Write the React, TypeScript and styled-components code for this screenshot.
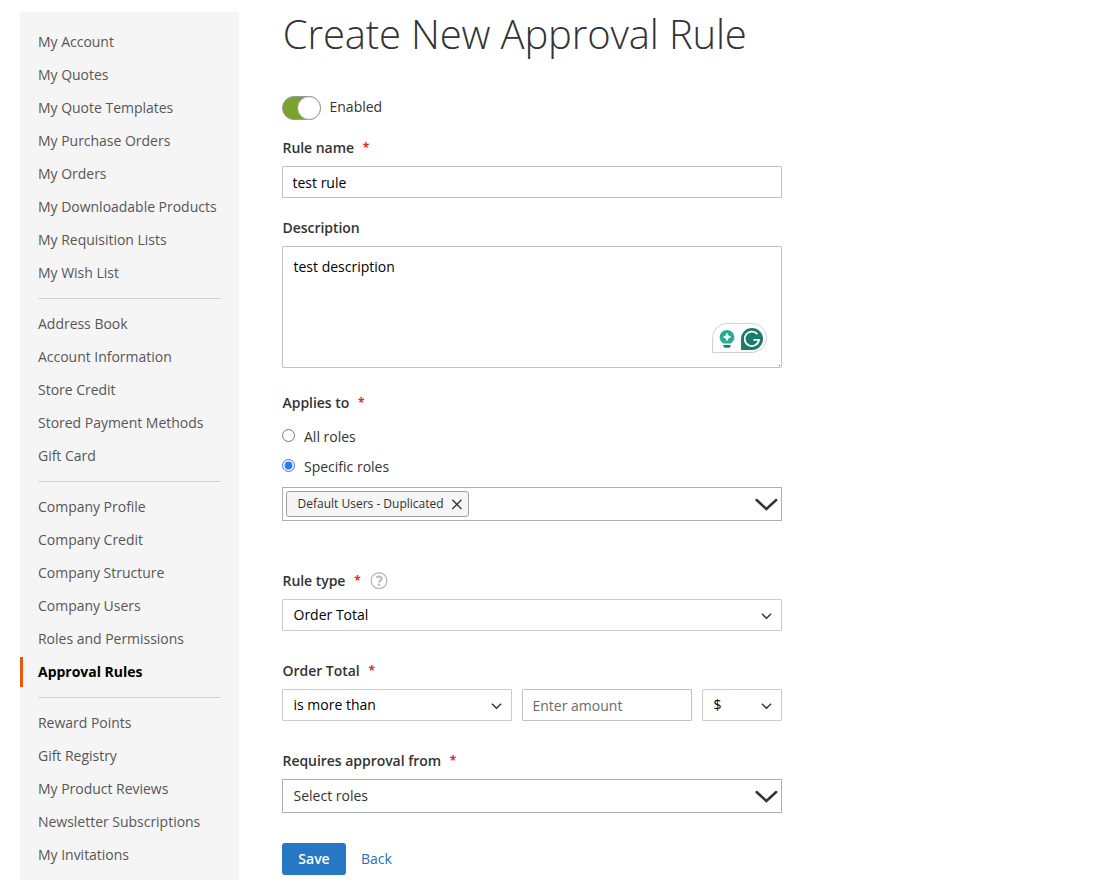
import React, { useState } from 'react'
import styled, { createGlobalStyle, css } from 'styled-components'

const GlobalStyle = createGlobalStyle`
  * {
    box-sizing: border-box;
  }

  body {
    margin: 0;
    background-color: white;
    color: #333;
    font-family: 'Open Sans', 'Noto Sans', sans-serif;
    font-size: 14px;
    line-height: 20px;
  }
`

const Page = styled.div`
  display: flex;
  align-items: flex-start;
  gap: 43px;
  height: 880px;
  padding: 12px 20px 0;
  overflow: hidden;
`

const Sidebar = styled.nav`
  flex: none;
  width: 219px;
  height: 900px;
  padding: 15px 0;
  background-color: #f5f5f5;
`

const NavGroup = styled.ul`
  display: flex;
  flex-direction: column;
  gap: 3px;
  margin: 0;
  padding: 0;
  list-style: none;
`

const Divider = styled.hr`
  margin: 10px 18px;
  border: none;
  border-top: 1px solid #d1d1d1;
`

const NavItem = styled.li<{ isCurrent?: boolean; }>`
  height: 30px;
  padding-left: 15px;
  border-left: 3px solid ${ props => props.isCurrent ? '#e8590c' : 'transparent' };
  color: ${ props => props.isCurrent ? 'black' : '#575757' };
  font-weight: ${ props => props.isCurrent ? 700 : 400 };
  letter-spacing: -0.02px;
  line-height: 30px;
  white-space: nowrap;
`

const Form = styled.main`
  width: 500px;
`

const Title = styled.h1`
  margin: 0 0 40px;
  padding-left: 0.8px;
  color: #333;
  font-size: 40px;
  font-weight: 300;
  letter-spacing: -0.15px;
  line-height: 44px;
  white-space: nowrap;
`

const ToggleRow = styled.label`
  display: flex;
  gap: 8.5px;
  height: 24px;
  margin-bottom: 18px;
  line-height: 22px;
`

const Track = styled.span`
  display: flex;
  justify-content: flex-end;
  width: 39px;
  height: 24px;
  border: 1px solid #999;
  border-radius: 12px;
  background-color: #79a22e;
`

const Knob = styled.span`
  width: 24px;
  height: 24px;
  margin: -1px;
  border: 1px solid #999;
  border-radius: 50%;
  background-color: white;
`

const Field = styled.div<{ gap?: number; }>`
  margin-bottom: ${ props => props.gap ?? 30 }px;
`

const Label = styled.div<{ gap?: number; }>`
  display: flex;
  align-items: center;
  height: 20px;
  margin-bottom: ${ props => props.gap ?? 8 }px;
  padding-left: 0.5px;
  font-weight: 600;
  letter-spacing: -0.04px;
`

const Required = styled.span`
  margin-left: 8.8px;
  color: #e02b27;
  font-size: 12px;
  font-weight: 700;
`

const HelpIcon = styled.svg`
  margin-left: 9px;
`

const control = css`
  display: block;
  width: 100%;
  border: 1px solid #c2c2c2;
  border-radius: 1px;
  outline: none;
  background-color: white;
  color: black;
  font-family: inherit;
  font-size: 14px;
`

const Input = styled.input`
  ${ control }
  height: 32px;
  padding: 1px 9px 0 9.5px;

  &::placeholder {
    color: #6b6b6b;
    opacity: 1;
  }
`

const TextareaWrapper = styled.div`
  position: relative;
`

const Textarea = styled.textarea`
  ${ control }
  height: 122px;
  padding: 10px 10.5px;
  line-height: 20px;
  resize: none;
`

const WritingBadge = styled.div`
  position: absolute;
  right: 15px;
  bottom: 15px;
  display: flex;
  align-items: center;
  justify-content: center;
  gap: 6px;
  width: 55px;
  height: 30px;
  padding: 1px 0 0 2px;
  border: 1px solid #cfd0dc;
  border-radius: 15px 15px 15px 0;
  background-color: white;
`

const Grip = styled.span`
  position: absolute;
  right: 2px;
  bottom: 2px;
  width: 1px;
  height: 1px;
  background-color: #444;
`

const RadioRow = styled.label`
  display: flex;
  align-items: center;
  height: 20px;
  margin-bottom: 10px;
`

const Radio = styled.input`
  width: 13px;
  height: 13px;
  margin: 0 9px 3px 0;
  accent-color: #2979ff;
`

const MultiSelect = styled.div`
  display: flex;
  align-items: center;
  justify-content: space-between;
  height: 34px;
  padding: 0 3px;
  border: 1px solid #adadad;
`

const Placeholder = styled.span`
  padding-left: 7.5px;
`

const Chip = styled.span`
  display: flex;
  align-items: center;
  justify-content: space-between;
  width: 183px;
  height: 26px;
  padding: 0 5px 0 10.5px;
  border: 1px solid #a79d95;
  border-radius: 3px;
  background-color: #f5f5f5;
  font-size: 12px;
  line-height: 24px;
`

const Select = styled.div`
  ${ control }
  display: flex;
  align-items: center;
  justify-content: space-between;
  height: 32px;
  padding: 0 8px 0 10.5px;
  border-color: #ccc;
  line-height: 30px;
`

const AmountRow = styled.div`
  display: grid;
  grid-template-columns: 230px 170px 80px;
  gap: 10px;
`

const Actions = styled.div`
  display: flex;
  align-items: center;
  gap: 15px;
`

const SaveButton = styled.button`
  width: 64px;
  height: 32px;
  padding: 0 0 1px;
  border: none;
  border-radius: 3px;
  background-color: #2678c4;
  color: white;
  font-family: inherit;
  font-size: 14px;
  font-weight: 600;
  line-height: 20px;
`

const BackLink = styled.a`
  color: #1f6fb8;
`

const groups = [
  ['My Account', 'My Quotes', 'My Quote Templates', 'My Purchase Orders', 'My Orders', 'My Downloadable Products', 'My Requisition Lists', 'My Wish List'],
  ['Address Book', 'Account Information', 'Store Credit', 'Stored Payment Methods', 'Gift Card'],
  ['Company Profile', 'Company Credit', 'Company Structure', 'Company Users', 'Roles and Permissions', 'Approval Rules'],
  ['Reward Points', 'Gift Registry', 'My Product Reviews', 'Newsletter Subscriptions', 'My Invitations'],
]

const SmallChevron = () => (
  <svg width='13' height='10' viewBox='0 0 13 10' fill='none'>
    <path d='M1.9 3.8 L6.5 8.3 L11.1 3.8' stroke='#333' strokeWidth='1.4' />
  </svg>
)

const BigChevron = () => (
  <svg width='24' height='16' viewBox='0 0 24 16' fill='none'>
    <path d='M2.6 4 L12.4 13 L22.2 4' stroke='#333' strokeWidth='2.5' strokeLinecap='round' />
  </svg>
)

const Asterisk = () => <Required>*</Required>

const App = () => {
  const [name, setName] = useState('test rule')
  const [description, setDescription] = useState('test description')
  const [scope, setScope] = useState('specific')

  return (
    <Page>
      <GlobalStyle />
      <Sidebar>
        { groups.map((group, index) => (
          <React.Fragment key={ group[0] }>
            { index > 0 && <Divider /> }
            <NavGroup>
              { group.map(item => <NavItem key={ item } isCurrent={ item === 'Approval Rules' }>{ item }</NavItem>) }
            </NavGroup>
          </React.Fragment>
        )) }
      </Sidebar>
      <Form>
        <Title>Create New Approval Rule</Title>
        <ToggleRow>
          <Track><Knob /></Track>
          Enabled
        </ToggleRow>
        <Field gap={ 20 }>
          <Label>Rule name<Asterisk /></Label>
          <Input value={ name } onChange={ e => setName(e.target.value) } />
        </Field>
        <Field gap={ 25 }>
          <Label>Description</Label>
          <TextareaWrapper>
            <Textarea value={ description } spellCheck={ false } onChange={ e => setDescription(e.target.value) } />
            <WritingBadge>
              <svg width='16' height='20' viewBox='0 0 16 20'>
                <path d='M8 1 C3.9 1 .7 4.2 .7 8.2 C.7 11.3 2.4 12.9 4.2 14.5 H11.8 C13.6 12.9 15.3 11.3 15.3 8.2 C15.3 4.2 12.1 1 8 1Z' fill='#27ae91' />
                <path d='M8 4.5 C8.6 6.7 9.3 7.4 11.5 8 C9.3 8.6 8.6 9.3 8 11.5 C7.4 9.3 6.7 8.6 4.5 8 C6.7 7.4 7.4 6.7 8 4.5Z' fill='white' stroke='white' strokeLinejoin='round' />
                <path d='M4.3 16 H11.7 V17 Q11.4 18.8 9.8 18.8 H6.2 Q4.6 18.8 4.3 17Z' fill='#16806d' />
              </svg>
              <svg width='22' height='22' viewBox='0 0 22 22'>
                <path d='M0 22 V11 A11 11 0 1 1 11 22Z' fill='#1c7c6c' />
                <path d='M16.4 6.2 A7.2 7.2 0 1 0 18 11.8 H12.4' fill='none' stroke='white' strokeWidth='1.8' />
              </svg>
            </WritingBadge>
            <Grip />
          </TextareaWrapper>
        </Field>
        <Field gap={ 50 }>
          <Label gap={ 14 }>Applies to<Asterisk /></Label>
          <RadioRow>
            <Radio type='radio' name='scope' checked={ scope === 'all' } onChange={ () => setScope('all') } />
            All roles
          </RadioRow>
          <RadioRow>
            <Radio type='radio' name='scope' checked={ scope === 'specific' } onChange={ () => setScope('specific') } />
            Specific roles
          </RadioRow>
          <MultiSelect>
            <Chip>
              Default Users - Duplicated
              <svg width='12' height='12' viewBox='0 0 12 12'>
                <path d='M1.3 1.8 L10.5 11 M10.5 1.8 L1.3 11' stroke='#333' strokeWidth='1.3' />
              </svg>
            </Chip>
            <BigChevron />
          </MultiSelect>
        </Field>
        <Field>
          <Label>
            Rule type<Asterisk />
            <HelpIcon width='18' height='18' viewBox='0 0 18 18' fill='none' stroke='#bbb'>
              <circle cx='9' cy='8.7' r='7.9' strokeWidth='1.4' />
              <path d='M6.3 5.6 Q7.3 4.6 9 4.6 Q11.6 4.6 11.6 6.7 Q11.6 8 10.2 8.7 Q9 9.4 9 10.5' strokeWidth='2' />
              <path d='M9 11.6 V13.8' strokeWidth='2.3' />
            </HelpIcon>
          </Label>
          <Select>Order Total<SmallChevron /></Select>
        </Field>
        <Field>
          <Label>Order Total<Asterisk /></Label>
          <AmountRow>
            <Select>is more than<SmallChevron /></Select>
            <Input placeholder='Enter amount' />
            <Select>$<SmallChevron /></Select>
          </AmountRow>
        </Field>
        <Field>
          <Label>Requires approval from<Asterisk /></Label>
          <MultiSelect>
            <Placeholder>Select roles</Placeholder>
            <BigChevron />
          </MultiSelect>
        </Field>
        <Actions>
          <SaveButton>Save</SaveButton>
          <BackLink>Back</BackLink>
        </Actions>
      </Form>
    </Page>
  )
}

export default App
